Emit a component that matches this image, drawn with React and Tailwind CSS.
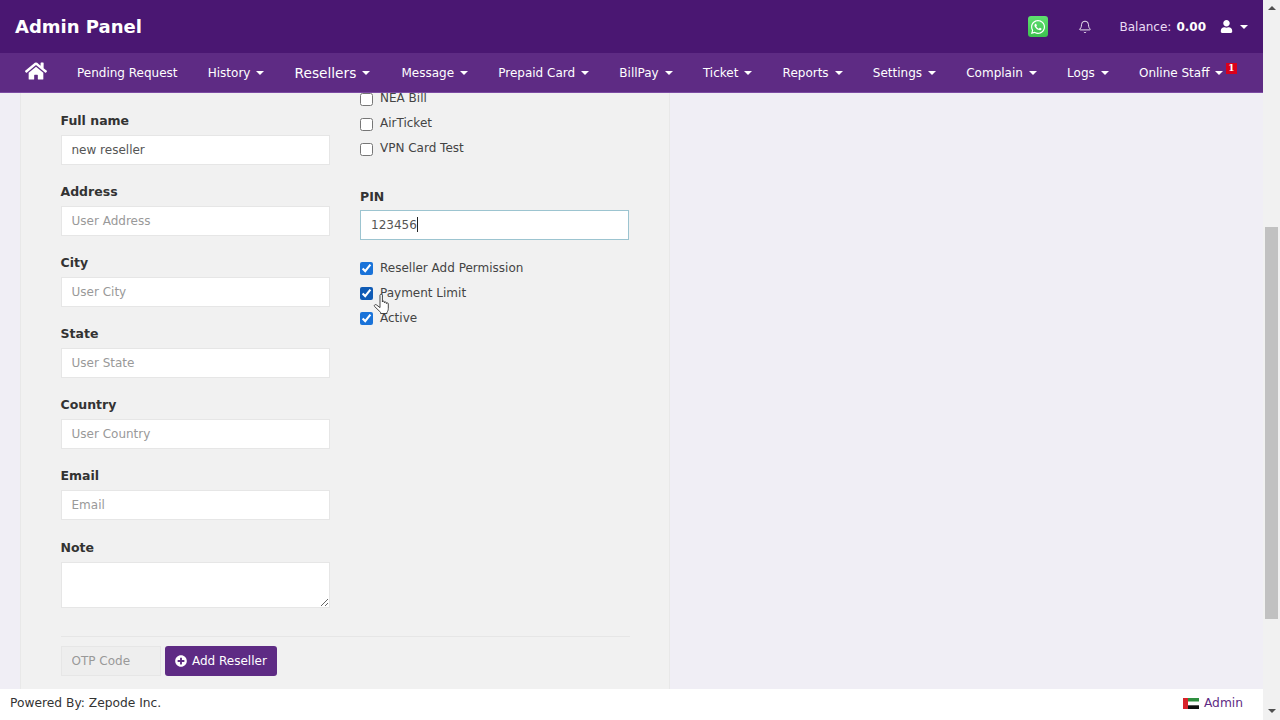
// Admin panel, add reseller form (scrolled state)
import { FaHome, FaUser, FaWhatsapp, FaPlusCircle } from "react-icons/fa";
import { Bell } from "lucide-react";

const menu = [
  { label: "Pending Request" },
  { label: "History", caret: true },
  { label: "Resellers", caret: true, big: true },
  { label: "Message", caret: true },
  { label: "Prepaid Card", caret: true },
  { label: "BillPay", caret: true },
  { label: "Ticket", caret: true },
  { label: "Reports", caret: true },
  { label: "Settings", caret: true },
  { label: "Complain", caret: true },
  { label: "Logs", caret: true },
];

const fields = [
  { label: "Full name", value: "new reseller" },
  { label: "Address", placeholder: "User Address" },
  { label: "City", placeholder: "User City" },
  { label: "State", placeholder: "User State" },
  { label: "Country", placeholder: "User Country" },
  { label: "Email", placeholder: "Email" },
];

function Caret({ className = "border-t-white" }) {
  return <span className={`block h-0 w-0 border-x-4 border-t-4 border-x-transparent ${className}`} />;
}

function Check({ label, checked, hover }) {
  return (
    <label className="flex h-[25px] items-center gap-[7px] text-[12px] text-[#444]">
      <input
        type="checkbox"
        defaultChecked={checked}
        className={`mt-[2px] h-[13px] w-[13px] ${hover ? "accent-[#0f5bb5]" : "accent-[#1a73d9]"}`}
      />
      {label}
    </label>
  );
}

function Field({ label, value, placeholder }) {
  return (
    <div className="mb-[17.2px]">
      <div className="h-5 text-[12.5px] leading-5 font-bold text-[#333]">{label}</div>
      <input
        readOnly
        value={value}
        placeholder={placeholder}
        className="mt-[4px] h-[30px] w-full border border-[#e6e6e6] bg-white px-[10px] text-[12px] text-[#555] outline-none placeholder:text-[#999]"
      />
    </div>
  );
}

function UaeFlag() {
  return (
    <svg width="16" height="11" viewBox="0 0 16 11" className="shrink-0">
      <rect width="16" height="3.7" fill="#2f8f3f" />
      <rect y="3.7" width="16" height="3.6" fill="#fff" />
      <rect y="7.3" width="16" height="3.7" fill="#111" />
      <rect width="5" height="11" fill="#d8232a" />
    </svg>
  );
}

function HandCursor() {
  return (
    <svg width="17" height="22" viewBox="0 0 17 22" className="absolute top-[293px] left-[373px]">
      <path
        d="M7 2.200c0-1.300 2.400-1.300 2.400 0V9c0-1.200 2-1.200 2 0v.8c0-1.100 2-1.100 2 0v.8c0-1 1.900-1 1.900.2v4.500c0 2-.6 3-1.300 4v1.200H7.600v-1.200L1.600 13.500c-1-1.300.8-2.600 2-1.500L7 14.600z"
        fill="#fff"
        stroke="#333"
        strokeWidth="0.9"
        strokeLinejoin="round"
      />
    </svg>
  );
}

export default function App() {
  return (
    <div className="relative flex h-screen overflow-hidden bg-[#f1f1f1] font-['DejaVu_Sans',sans-serif]">
      <div className="flex min-w-0 flex-1 flex-col">
        <header className="flex h-[53px] shrink-0 items-center bg-[#4a1772] pr-[15px] pl-[15px] text-white">
          <div className="text-[18px] font-bold">Admin Panel</div>
          <div className="ml-auto flex items-center">
            <span className="flex h-[21px] w-[20px] items-center justify-center rounded-[3px] bg-gradient-to-b from-[#5fe06f] to-[#3cc14f]">
              <FaWhatsapp className="text-[16px]" />
            </span>
            <Bell size={14} strokeWidth={1.5} className="ml-[30px]" />
            <span className="ml-[27px] text-[12px] text-[#eadcf5]">Balance:</span>
            <span className="ml-[5px] text-[12px] font-bold">0.00</span>
            <FaUser className="ml-[14px] text-[13px]" />
            <span className="ml-[7px]">
              <Caret />
            </span>
          </div>
        </header>

        <nav className="flex h-[40px] shrink-0 items-center border-b border-[#7c4ba3] bg-[#5e2b84] pl-[25px] text-white">
          <FaHome className="mr-[30px] mb-[3px] text-[22px]" />
          {menu.map((m) => (
            <span
              key={m.label}
              className={`flex items-center gap-[6px] pt-[1px] whitespace-nowrap ${m.big ? "mr-[31.2px]" : "mr-[30.2px]"}`}
            >
              <span className={m.big ? "text-[13.7px]" : "text-[12px]"}>{m.label}</span>
              {m.caret && <Caret />}
            </span>
          ))}
          <span className="relative flex items-center gap-[6px] pt-[1px] text-[12px] whitespace-nowrap">
            Online Staff
            <Caret />
            <span className="absolute top-0 left-[87px] flex h-[11px] w-[11px] items-center justify-center bg-[#d9001b] font-['DejaVu_Serif',serif] text-[9px] font-bold">
              1
            </span>
          </span>
        </nav>

        <main className="min-h-0 flex-1 overflow-hidden bg-[#f0eef5] pl-[20px]">
          <div className="h-[640px] w-[650px] border-x border-[#e8e8e8] bg-[#f1f1f1] px-[39.5px]">
            <div className="flex gap-[30.5px]">
              <div className="w-[269px] pt-[17.5px]">
                {fields.map((f) => (
                  <Field key={f.label} {...f} />
                ))}
                <div className="h-5 text-[12.5px] leading-5 font-bold text-[#333]">Note</div>
                <textarea className="mt-[4px] block h-[46.5px] w-full border border-[#e6e6e6] bg-white outline-none" />
              </div>
              <div className="w-[269px]">
                <div className="-mt-[7.5px]">
                  <Check label="NEA Bill" />
                  <Check label="AirTicket" />
                  <Check label="VPN Card Test" />
                </div>
                <div className="mt-[26px] h-5 text-[12.5px] leading-5 font-bold text-[#333]">PIN</div>
                <div className="mt-[3px] flex h-[30px] items-center border border-[#9cc4d0] bg-white px-[10px] text-[12px] text-[#555]">
                  123456
                  <span className="h-[15px] w-px bg-[#222]" />
                </div>
                <div className="mt-[15.5px]">
                  <Check label="Reseller Add Permission" checked />
                  <Check label="Payment Limit" checked hover />
                  <Check label="Active" checked />
                </div>
              </div>
            </div>
            <div className="mt-[27.5px] flex items-start gap-[4.5px] border-t border-[#e6e6e6] pt-[9px]">
              <input
                disabled
                placeholder="OTP Code"
                className="h-[30px] w-[100px] border border-[#e6e6e6] bg-[#eeeeee] px-[10px] text-[12px] outline-none placeholder:text-[#999]"
              />
              <button
                type="button"
                className="mt-[0.5px] flex h-[30px] w-[112px] items-center gap-[5px] rounded-[3px] bg-[#5e2b84] pl-[10px] text-[12px] text-white"
              >
                <FaPlusCircle className="text-[12px]" />
                Add Reseller
              </button>
            </div>
          </div>
        </main>

        <footer className="flex h-[31px] shrink-0 items-center justify-between bg-white pr-[20px] pb-[3px] pl-[10px] text-[12.25px] text-[#333]">
          <span>Powered By: Zepode Inc.</span>
          <span className="flex items-center gap-[5px] text-[#5e2b84]">
            <UaeFlag />
            Admin
          </span>
        </footer>
      </div>

      <aside className="flex w-[17px] shrink-0 flex-col items-center bg-[#f1f1f1]">
        <span className="mt-[6px]">
          <Caret className="rotate-180 border-t-[#505050]" />
        </span>
        <div className="mt-[217px] h-[392px] w-[13px] bg-[#c1c1c1]" />
        <span className="mt-auto mb-[7px]">
          <Caret className="border-t-[#505050]" />
        </span>
      </aside>

      <HandCursor />
    </div>
  );
}
